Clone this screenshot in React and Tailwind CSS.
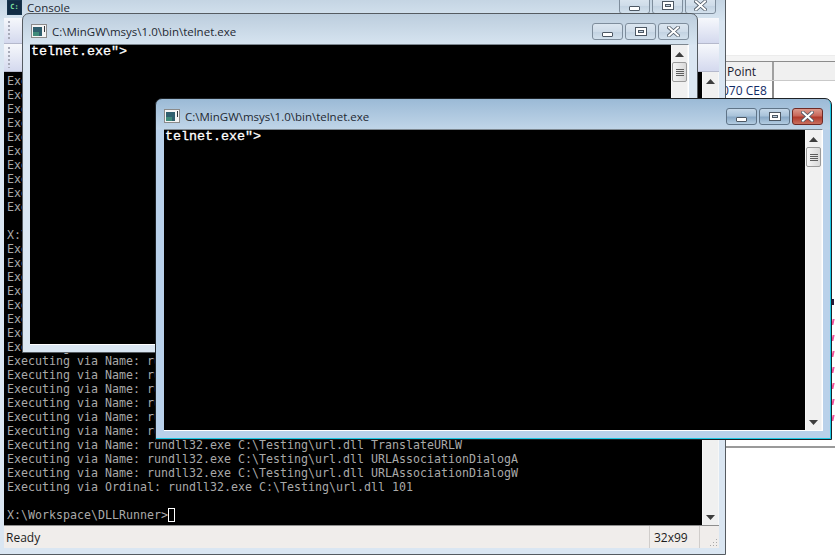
const SANS = "font-['Open_Sans','Noto_Sans',sans-serif]";

const consoleLines = [
  ...Array(10).fill("Executing via Name: rundll32.exe C:\\Testing\\url.dll FileProtocolHandler"),
  "",
  "X:\\Workspace\\DLLRunner>DLLRunner.exe C:\\Testing\\url.dll",
  ...Array(14).fill("Executing via Name: rundll32.exe C:\\Testing\\url.dll FileProtocolHandlerA"),
  "Executing via Name: rundll32.exe C:\\Testing\\url.dll TranslateURLW",
  "Executing via Name: rundll32.exe C:\\Testing\\url.dll URLAssociationDialogA",
  "Executing via Name: rundll32.exe C:\\Testing\\url.dll URLAssociationDialogW",
  "Executing via Ordinal: rundll32.exe C:\\Testing\\url.dll 101",
  "",
];

function CaptionButton({ kind, active }) {
  const red = kind === "close" && active;
  const face = red
    ? "border-[#6f2a25] bg-[linear-gradient(#dc9a8d_0%,#c9675a_45%,#b03a2c_55%,#c9705f_100%)]"
    : active
      ? "border-[#5f7488] bg-[linear-gradient(#c5d8e9_0%,#a9c3da_45%,#8aa9c6_55%,#b4cde2_100%)]"
      : "border-[#7e8d9c] bg-[linear-gradient(#dbe6f0_0%,#cfdce9_50%,#c3d3e2_55%,#d3e1ed_100%)]";

  return (
    <div className={`flex h-[17px] w-[31px] items-center justify-center rounded-[3px] border ${face}`}>
      {kind === "min" && (
        <div className="mt-[5px] h-[5px] w-[11px] rounded-[1px] border border-[#4d5864] bg-white"></div>
      )}
      {kind === "max" && (
        <div className="flex h-[9px] w-[12px] items-center justify-center border border-[#4d5864] bg-white">
          <div className="h-[3px] w-[6px] border border-[#4d5864] bg-[#c3d3e2]"></div>
        </div>
      )}
      {kind === "close" && (
        <svg width="13" height="11" viewBox="0 0 13 11">
          <path d="M2 1.5 L11 9.5 M11 1.5 L2 9.5" stroke="#4d5864" strokeWidth="3.6" strokeLinecap="square" />
          <path d="M2 1.5 L11 9.5 M11 1.5 L2 9.5" stroke="#ffffff" strokeWidth="2" strokeLinecap="square" />
        </svg>
      )}
    </div>
  );
}

function TelnetIcon() {
  return (
    <svg width="16" height="14" viewBox="0 0 16 14" className="shrink-0">
      <rect x="0.5" y="0.5" width="15" height="13" fill="#f4f4f4" stroke="#8a8a8a" />
      <rect x="2" y="3" width="9" height="9" fill="#2f5f6e" />
      <rect x="2" y="8" width="6" height="4" fill="#3f8a7a" />
      <rect x="13" y="2" width="1" height="6" fill="#30363c" />
    </svg>
  );
}

function ConsoleIcon() {
  return (
    <div className="flex h-[15px] w-[15px] shrink-0 items-center justify-center border border-[#16344c] bg-[#122c44] font-['DejaVu_Sans_Mono',monospace] text-[7px] font-bold leading-none text-[#7fe0a0]">
      C:
    </div>
  );
}

function Scrollbar({ thumb = true }) {
  return (
    <div className="flex w-[17px] shrink-0 flex-col items-center border-x border-[#f7f7f7] bg-[#f0f0f0]">
      <svg width="9" height="5" viewBox="0 0 9 5" className="mt-[7px] shrink-0">
        <path d="M4.5 0 L9 5 L0 5 Z" fill="#3d3d3d" />
      </svg>
      {thumb && (
        <div className="mt-[5px] flex h-[20px] w-[15px] shrink-0 flex-col items-center justify-center gap-[1px] rounded-[2px] border border-[#9a9a9a] bg-[linear-gradient(90deg,#f5f5f5,#d9d9d9)]">
          <div className="h-[1px] w-[8px] bg-[#5d5d5d]"></div>
          <div className="h-[1px] w-[8px] bg-[#5d5d5d]"></div>
          <div className="h-[1px] w-[8px] bg-[#5d5d5d]"></div>
          <div className="h-[1px] w-[8px] bg-[#5d5d5d]"></div>
        </div>
      )}
      <svg width="9" height="5" viewBox="0 0 9 5" className="mt-auto mb-[5px] shrink-0">
        <path d="M0 0 L9 0 L4.5 5 Z" fill="#3d3d3d" />
      </svg>
    </div>
  );
}

function Window({ title, icon, active, className, captionClass, buttonClass, children }) {
  return (
    <div
      className={`absolute flex flex-col rounded-t-[7px] border ${
        active
          ? "border-[#1d2226] bg-[#b9d1ea] bg-[linear-gradient(#9bbad6_0px,#c0d5e8_30px,#b9d1ea_31px)] shadow-[inset_-1px_-1px_0_#1cc8e4]"
          : "border-[#555b61] bg-[#dae6f2] bg-[linear-gradient(#bccddd_0px,#d6e4f0_30px,#dae6f2_31px)]"
      } ${className}`}
    >
      <div className={`flex shrink-0 items-start ${captionClass}`}>
        {icon}
        <span className={`ml-[5px] text-[11.5px] leading-[16px] text-[#1f2933] ${SANS}`}>{title}</span>
        <div className={`ml-auto flex gap-[2px] ${buttonClass}`}>
          <CaptionButton kind="min" active={active} />
          <CaptionButton kind="max" active={active} />
          <CaptionButton kind="close" active={active} />
        </div>
      </div>
      {children}
    </div>
  );
}

function TelnetClient() {
  return (
    <div className="flex min-h-0 flex-1 border-t border-r-[1px] border-b-[1px] border-t-[#7d8790] border-r-white border-b-white">
      <div className="min-w-0 flex-1 bg-black pl-[1px] font-['Liberation_Mono',monospace] text-[13.33px] leading-[13px] text-white [-webkit-text-stroke:0.3px_#ffffff]">
        telnet.exe"&gt;
      </div>
      <Scrollbar />
    </div>
  );
}

function ToolbarRow({ className }) {
  return (
    <div className={`relative border-b border-[#b5b9cc] bg-[linear-gradient(#f6f8fc,#d4d9ee)] ${className}`}>
      <div className="ml-[4px] flex h-full flex-col justify-center gap-[2px] py-[3px]">
        <div className="h-full w-[2px] bg-[repeating-linear-gradient(#a7aab8_0px,#a7aab8_2px,transparent_2px,transparent_4px)]"></div>
      </div>
    </div>
  );
}

function BackgroundTable() {
  return (
    <div className="absolute top-0 left-[726px] flex h-[448px] w-[109px] flex-col border-b-2 border-[#9a9a9a] bg-white">
      <div className="h-[56px] shrink-0 border-b border-[#ececec]"></div>
      <div className="h-[6px] shrink-0 border-b border-[#8c8c8c] bg-[#f4f4f4]"></div>
      <div className="flex h-[19px] shrink-0 border-b border-[#c9c9c9] bg-[#f0f0f0]">
        <div className={`w-[48px] border-r-2 border-[#a0a0a0] pl-[1px] text-[12px] leading-[20px] text-[#1a1a2e] ${SANS}`}>
          Point
        </div>
      </div>
      <div className="flex h-[18px] shrink-0">
        <div className={`w-[48px] overflow-hidden border-r-2 border-[#8a8a8a] text-[12px] leading-[20px] whitespace-pre text-[#102a66] ${SANS}`}>
          <span className="ml-[-4px]">070 CE8</span>
        </div>
      </div>
      <div className="mt-auto flex flex-col items-end gap-[10px] pr-[1px] pb-[25px]">
        <div className="mb-[4px] h-[6px] w-[3px] bg-[#2a1a3c]"></div>
        <div className="h-[6px] w-[2px] -skew-x-12 bg-[#f0509a]"></div>
        <div className="h-[6px] w-[2px] -skew-x-12 bg-[#f0509a]"></div>
        <div className="h-[6px] w-[2px] -skew-x-12 bg-[#f0509a]"></div>
        <div className="h-[6px] w-[2px] -skew-x-12 bg-[#f0509a]"></div>
        <div className="h-[6px] w-[2px] -skew-x-12 bg-[#f0509a]"></div>
        <div className="h-[6px] w-[2px] -skew-x-12 bg-[#f0509a]"></div>
        <div className="h-[6px] w-[2px] -skew-x-12 bg-[#f0509a]"></div>
      </div>
    </div>
  );
}

export default function App() {
  return (
    <div className="relative h-[556px] w-[835px] overflow-hidden bg-white">
      <BackgroundTable />

      <Window
        title="Console"
        icon={<ConsoleIcon />}
        className="top-[-11px] left-[-1px] h-[566px] w-[727px] pr-[6px] pb-[6px] pl-[4px]"
        captionClass="h-[28px] pt-[10px] pl-[3px] pr-[3px]"
        buttonClass="mt-[-3px]"
      >
        <ToolbarRow className="h-[26px] shrink-0" />
        <ToolbarRow className="h-[28px] shrink-0" />
        <div className="flex min-h-0 flex-1">
          <div className="min-w-0 flex-1 overflow-hidden bg-black pt-[2px] pl-[3px] font-['DejaVu_Sans_Mono',monospace] text-[11.63px] leading-[14px] whitespace-pre text-[#a9a9a9]">
            {consoleLines.map((line, i) => (
              <div key={i} className="h-[14px]">
                {line}
              </div>
            ))}
            <div className="flex h-[14px] items-center">
              <span>X:\Workspace\DLLRunner&gt;</span>
              <span className="inline-block h-[14px] w-[7px] border border-white"></span>
            </div>
          </div>
          <Scrollbar thumb={false} />
        </div>
        <div className={`flex h-[23px] shrink-0 border-t border-[#8e8e8e] bg-[#f0edeb] text-[12px] leading-[23px] text-[#1c1c1c] ${SANS}`}>
          <div className="flex-1 pl-[2px]">Ready</div>
          <div className="w-[50px] border-l border-[#d0cdcb] pl-[4px]">32x99</div>
          <div className="relative w-[20px] border-l border-[#d0cdcb]">
            <svg width="10" height="8" viewBox="0 0 10 8" className="absolute right-[1px] bottom-[1px]">
              <path d="M8 0h1v1H8zM5 3h1v1H5zM8 3h1v1H8zM2 6h1v1H2zM5 6h1v1H5zM8 6h1v1H8z" fill="#a9a9a9" />
            </svg>
          </div>
        </div>
      </Window>

      <Window
        title="C:\MinGW\msys\1.0\bin\telnet.exe"
        icon={<TelnetIcon />}
        className="top-[13px] left-[22px] h-[340px] w-[676px] pr-[8px] pb-[7px] pl-[7px]"
        captionClass="h-[30px] pt-[10px] pl-[1px]"
        buttonClass="mt-[-1px]"
      >
        <TelnetClient />
      </Window>

      <Window
        title="C:\MinGW\msys\1.0\bin\telnet.exe"
        icon={<TelnetIcon />}
        active
        className="top-[98px] left-[155px] h-[342px] w-[677px] pr-[8px] pb-[8px] pl-[8px]"
        captionClass="h-[30px] pt-[10px]"
        buttonClass="mt-[-1px]"
      >
        <TelnetClient />
      </Window>
    </div>
  );
}
